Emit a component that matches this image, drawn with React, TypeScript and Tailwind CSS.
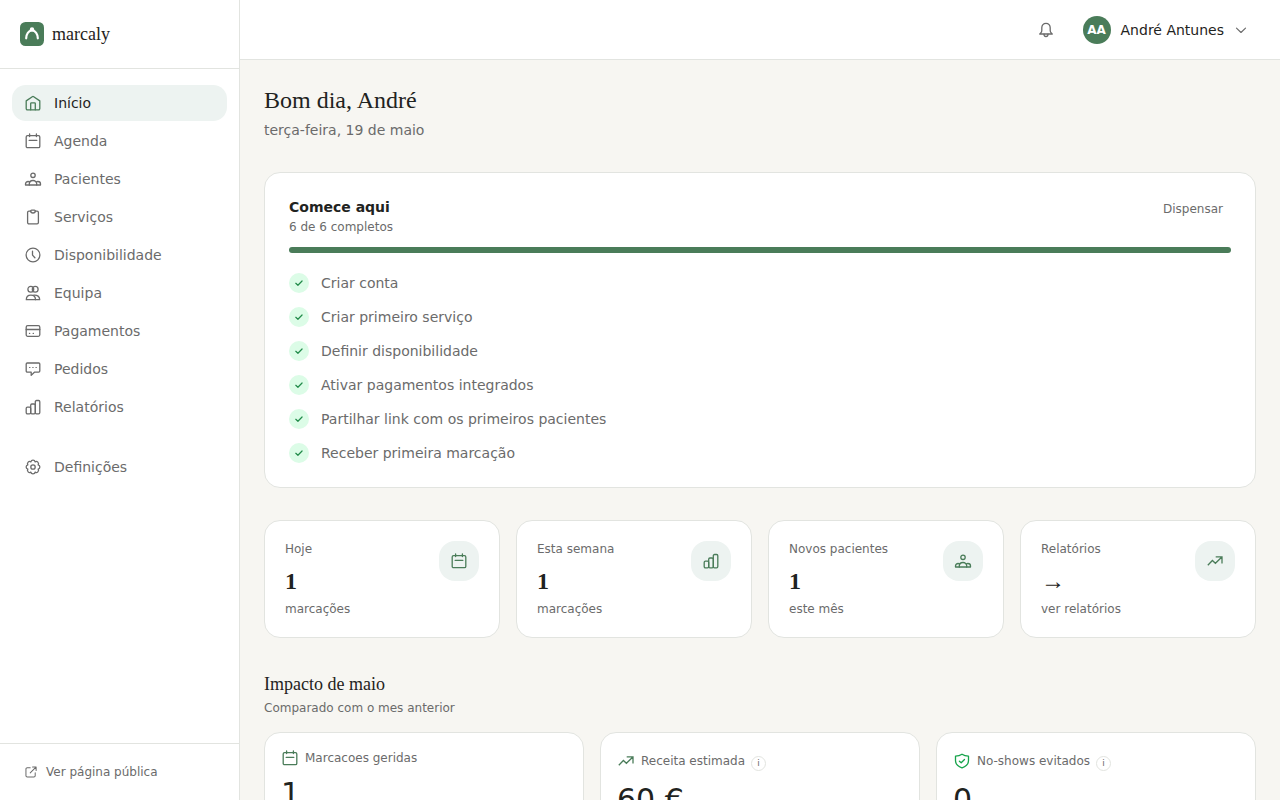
import type { ReactNode } from "react";

interface IconProps {
  size?: number;
  className?: string;
}

function Svg({
  size = 18,
  className,
  children,
}: IconProps & { children: ReactNode }) {
  return (
    <svg
      width={size}
      height={size}
      viewBox="0 0 18 18"
      fill="none"
      stroke="currentColor"
      strokeWidth={1.3}
      strokeLinecap="round"
      strokeLinejoin="round"
      className={`shrink-0 ${className ?? ""}`}
    >
      {children}
    </svg>
  );
}

const HomeIcon = (p: IconProps) => (
  <Svg {...p}>
    <path d="M2.200 6.900 8.300 2.700a1.200 1.200 0 0 1 1.400 0l6.100 4.200v7.700a1.200 1.200 0 0 1-1.200 1.200H3.400a1.200 1.200 0 0 1-1.200-1.200z" />
    <path d="M6.700 15.800V9.600c0-.4.300-.7.700-.7h3.200c.4 0 .7.300.7.700v6.200" />
  </Svg>
);

const CalendarIcon = (p: IconProps) => (
  <Svg {...p}>
    <rect x="2.200" y="3.600" width="13.600" height="12.100" rx="1.300" />
    <path d="M5.600 2v2.500M12.400 2v2.500M5.200 8.400h7.600" />
  </Svg>
);

const PatientsIcon = (p: IconProps) => (
  <Svg {...p}>
    <circle cx="9" cy="5.300" r="2.200" />
    <path d="M5.300 15v-1.200c0-2 1.600-3.300 3.700-3.300s3.700 1.300 3.700 3.300V15" />
    <path d="M5.700 12.100c-.5-.4-1-.6-1.600-.6-1.500 0-2.600 1.100-2.600 2.600v.9h15v-.9c0-1.500-1.100-2.600-2.600-2.600-.6 0-1.100.2-1.600.6" />
  </Svg>
);

const ClipboardIcon = (p: IconProps) => (
  <Svg {...p}>
    <path d="M6.700 3.200H4.900a1.300 1.300 0 0 0-1.300 1.300v10a1.300 1.300 0 0 0 1.300 1.300h8.200a1.300 1.300 0 0 0 1.300-1.300v-10a1.300 1.300 0 0 0-1.300-1.300h-1.800" />
    <path d="M7.600 2.100h2.800c.5 0 .9.400.9.900 0 1.200-1 2-2.300 2S6.700 4.200 6.700 3c0-.5.4-.9.9-.9z" />
  </Svg>
);

const ClockIcon = (p: IconProps) => (
  <Svg {...p}>
    <circle cx="9" cy="9" r="6.900" />
    <path d="M8.500 5.200v3.900l2.400 2.700" />
  </Svg>
);

const TeamIcon = (p: IconProps) => (
  <Svg {...p}>
    <circle cx="6.800" cy="5.200" r="2.900" />
    <circle cx="11.200" cy="5.200" r="2.900" />
    <path d="M2.300 15.700c0-2.700 1.700-4.600 4.600-4.600s4.600 1.900 4.600 4.600z" />
    <path d="M9.800 11.100c3.600-.4 5.900 1.600 5.900 4.600h-4.200" />
  </Svg>
);

const CardIcon = (p: IconProps) => (
  <Svg {...p}>
    <rect x="2.200" y="3.700" width="13.600" height="10.600" rx="1.500" />
    <path d="M2.200 7.500h13.600" />
    <path d="M5.500 11.400h.2M9.200 11.400h.2" />
  </Svg>
);

const MessageIcon = (p: IconProps) => (
  <Svg {...p}>
    <path d="M3.300 3h11.400c.6 0 1.100.5 1.100 1.100v7c0 .6-.5 1.100-1.100 1.100h-4.300l-3.200 3.200v-3.200H3.300c-.6 0-1.100-.5-1.100-1.100v-7C2.200 3.500 2.700 3 3.300 3z" />
    <path strokeWidth={1} d="M5.500 7.500h.5M8.700 7.500h.5M11.900 7.500h.5" />
  </Svg>
);

const BarsIcon = (p: IconProps) => (
  <Svg {...p}>
    <rect x="2.200" y="9.200" width="4.500" height="6.600" rx="1.200" />
    <rect x="6.700" y="6" width="4.600" height="9.800" rx="1.200" />
    <rect x="11.300" y="2.500" width="4.500" height="13.300" rx="1.200" />
  </Svg>
);

const SettingsIcon = (p: IconProps) => (
  <Svg {...p}>
    <circle cx="9" cy="9" r="2.200" />
    <path d="M6.860 3.830a2.200 2.200 0 0 1 4.280 0 2.200 2.200 0 0 1 3.030 3.030 2.200 2.200 0 0 1 0 4.280 2.200 2.200 0 0 1-3.030 3.030 2.200 2.200 0 0 1-4.280 0 2.200 2.200 0 0 1-3.030-3.030 2.200 2.200 0 0 1 0-4.280 2.200 2.200 0 0 1 3.030-3.030z" />
  </Svg>
);

const ExternalIcon = (p: IconProps) => (
  <Svg {...p}>
    <path d="M8 3.600H4.200A1.700 1.700 0 0 0 2.500 5.300v8.500a1.700 1.700 0 0 0 1.700 1.700h8.500a1.700 1.700 0 0 0 1.700-1.700V10" />
    <path d="M11 2.600h4.600v4.600M15.400 2.800 8 10.200" />
  </Svg>
);

const BellIcon = (p: IconProps) => (
  <Svg {...p}>
    <path d="M9 2.400c-2.600 0-4.200 1.900-4.200 4.300v2.800c0 1.300-.5 2-1.200 2.600-.5.400-.9.700-.9.900h12.600c0-.2-.4-.5-.9-.9-.7-.6-1.200-1.300-1.200-2.600V6.700c0-2.400-1.600-4.300-4.200-4.300z" />
    <path d="M7 13.200c0 1.400.8 2.300 2 2.300s2-.9 2-2.300" />
  </Svg>
);

const TrendIcon = (p: IconProps) => (
  <Svg {...p}>
    <path
      strokeLinecap="butt"
      strokeLinejoin="miter"
      d="m1.800 13.200 4.600-4.700 3 2.800 6.200-6M9.700 4.900h6.300v6.700"
    />
  </Svg>
);

const ShieldIcon = (p: IconProps) => (
  <Svg {...p}>
    <path d="M9 2.200C7.200 3.500 4.800 4.100 2.500 4.100v4.500c0 3.600 2.800 6 6.500 7.200 3.700-1.200 6.500-3.600 6.500-7.200V4.100c-2.300 0-4.700-.6-6.500-1.900z" />
    <path d="m6.400 9.200 1.800 1.600 3.300-3.300" />
  </Svg>
);

const navItems = [
  { label: "Início", Icon: HomeIcon },
  { label: "Agenda", Icon: CalendarIcon },
  { label: "Pacientes", Icon: PatientsIcon },
  { label: "Serviços", Icon: ClipboardIcon },
  { label: "Disponibilidade", Icon: ClockIcon },
  { label: "Equipa", Icon: TeamIcon },
  { label: "Pagamentos", Icon: CardIcon },
  { label: "Pedidos", Icon: MessageIcon },
  { label: "Relatórios", Icon: BarsIcon },
];

const steps = [
  "Criar conta",
  "Criar primeiro serviço",
  "Definir disponibilidade",
  "Ativar pagamentos integrados",
  "Partilhar link com os primeiros pacientes",
  "Receber primeira marcação",
];

const stats = [
  { label: "Hoje", value: "1", hint: "marcações", Icon: CalendarIcon },
  { label: "Esta semana", value: "1", hint: "marcações", Icon: BarsIcon },
  { label: "Novos pacientes", value: "1", hint: "este mês", Icon: PatientsIcon },
  { label: "Relatórios", value: "→", hint: "ver relatórios", Icon: TrendIcon },
];

function NavItem({
  label,
  Icon,
  active,
}: {
  label: string;
  Icon: (p: IconProps) => ReactNode;
  active?: boolean;
}) {
  return (
    <a
      className={`flex h-9 items-center gap-3 rounded-[14px] px-3 text-sm ${
        active ? "bg-[#edf3f1] text-[#1f2321]" : "text-[#6b6b6b]"
      }`}
    >
      <Icon className={active ? "text-[#4a7c59]" : ""} />
      {label}
    </a>
  );
}

function Sidebar() {
  return (
    <aside className="flex w-60 shrink-0 flex-col border-r border-[#e2e4e0] bg-white">
      <div className="flex h-[69px] items-center gap-2 border-b border-[#e2e4e0] px-5">
        <svg width="24" height="24" viewBox="0 0 24 24" fill="none">
          <rect width="24" height="24" rx="5.500" fill="#4a7c59" />
          <path
            d="M6.200 16.300c.2-4.200 2.300-7.200 5.800-8 3.500.8 5.600 3.800 5.800 8"
            stroke="#fff"
            strokeWidth="2.200"
            strokeLinecap="round"
          />
          <circle cx="12" cy="7.400" r="2.200" fill="#fff" />
        </svg>
        <span className="font-['Liberation_Serif',serif] text-lg text-[#1f2321]">
          marcaly
        </span>
      </div>

      <nav className="flex flex-1 flex-col gap-0.5 px-3 pt-4">
        {navItems.map((item, i) => (
          <NavItem key={item.label} {...item} active={i === 0} />
        ))}
        <div className="mt-[22px]">
          <NavItem label="Definições" Icon={SettingsIcon} />
        </div>
      </nav>

      <div className="flex h-[57px] items-center gap-2 border-t border-[#e2e4e0] px-6 text-xs text-[#6b6b6b]">
        <ExternalIcon size={14} />
        Ver página pública
      </div>
    </aside>
  );
}

function Header() {
  return (
    <header className="flex h-[60px] shrink-0 items-center justify-end border-b border-[#e2e4e0] bg-white pr-8">
      <BellIcon className="mr-7 text-[#6b6b6b]" />
      <div className="flex items-center gap-2.5">
        <div className="flex size-7 items-center justify-center rounded-full bg-[#4a7c59] text-xs font-bold text-white">
          AA
        </div>
        <span className="text-sm text-[#1f2321]">André Antunes</span>
        <Svg size={14} className="text-[#6b6b6b]">
          <path strokeWidth={1.5} d="m3.200 6.600 5.800 5.600 5.800-5.600" />
        </Svg>
      </div>
    </header>
  );
}

function Onboarding() {
  return (
    <section className="mt-8 rounded-2xl border border-[#e2e4e0] bg-white p-6">
      <div className="flex items-start justify-between">
        <div>
          <h2 className="text-sm font-bold text-[#1f2321]">Comece aqui</h2>
          <p className="mt-0.5 text-xs text-[#6b6b6b]">6 de 6 completos</p>
        </div>
        <button className="px-2 py-1 text-xs text-[#6b6b6b]">Dispensar</button>
      </div>
      <div className="mt-3 h-1.5 rounded-full bg-[#4a7c59]" />
      <ul className="mt-5 flex flex-col gap-3.5">
        {steps.map((step) => (
          <li
            key={step}
            className="flex items-center gap-3 text-sm text-[#6b6b6b]"
          >
            <span className="flex size-5 items-center justify-center rounded-full bg-[#dcfce7] text-[#228b4a]">
              <Svg size={12}>
                <path strokeWidth={1.8} d="m4.200 9.400 3.200 3 6.200-6.400" />
              </Svg>
            </span>
            {step}
          </li>
        ))}
      </ul>
    </section>
  );
}

function ImpactCard({
  icon,
  label,
  value,
  info,
}: {
  icon: ReactNode;
  label: string;
  value: string;
  info?: boolean;
}) {
  return (
    <div className="h-[150px] rounded-2xl border border-[#e2e4e0] bg-white p-4">
      <div
        className={`flex items-center gap-1.5 text-xs text-[#6b6b6b] ${
          info ? "h-6" : "h-[18px]"
        }`}
      >
        {icon}
        {label}
        {info && (
          <span className="mt-1 flex size-[15px] items-center justify-center rounded-full border border-[#e2e4e0] text-[9px]">
            i
          </span>
        )}
      </div>
      <div className="mt-[9px] text-3xl text-[#1f2321]">{value}</div>
    </div>
  );
}

export default function App() {
  return (
    <div className="flex h-screen overflow-hidden bg-[#f7f6f2] font-['DejaVu_Sans',sans-serif]">
      <Sidebar />
      <div className="flex min-w-0 flex-1 flex-col">
        <Header />
        <main className="flex-1 overflow-hidden px-6 pt-6">
          <h1 className="font-['Liberation_Serif',serif] text-2xl text-[#1f2321]">
            Bom dia, André
          </h1>
          <p className="mt-1 text-sm text-[#6b6b6b]">terça-feira, 19 de maio</p>

          <Onboarding />

          <section className="mt-8 grid grid-cols-4 gap-4">
            {stats.map(({ label, value, hint, Icon }) => (
              <div
                key={label}
                className="flex items-start justify-between rounded-2xl border border-[#e2e4e0] bg-white p-5"
              >
                <div className="text-xs text-[#6b6b6b]">
                  <p>{label}</p>
                  <p className="mt-2 font-['Liberation_Serif',serif] text-2xl font-bold text-[#1f2321]">
                    {value}
                  </p>
                  <p className="mt-1">{hint}</p>
                </div>
                <div className="flex size-10 items-center justify-center rounded-2xl bg-[#edf3f1] text-[#4a7c59]">
                  <Icon />
                </div>
              </div>
            ))}
          </section>

          <section className="mt-8">
            <h2 className="font-['Liberation_Serif',serif] text-lg text-[#1f2321]">
              Impacto de maio
            </h2>
            <p className="mt-0.5 text-xs text-[#6b6b6b]">
              Comparado com o mes anterior
            </p>
            <div className="mt-4 grid grid-cols-3 gap-4">
              <ImpactCard
                icon={<CalendarIcon className="text-[#4a7c59]" />}
                label="Marcacoes geridas"
                value="1"
              />
              <ImpactCard
                icon={<TrendIcon className="text-[#4a7c59]" />}
                label="Receita estimada"
                value="60 €"
                info
              />
              <ImpactCard
                icon={<ShieldIcon className="text-[#16a34a]" />}
                label="No-shows evitados"
                value="0"
                info
              />
            </div>
          </section>
        </main>
      </div>
    </div>
  );
}
